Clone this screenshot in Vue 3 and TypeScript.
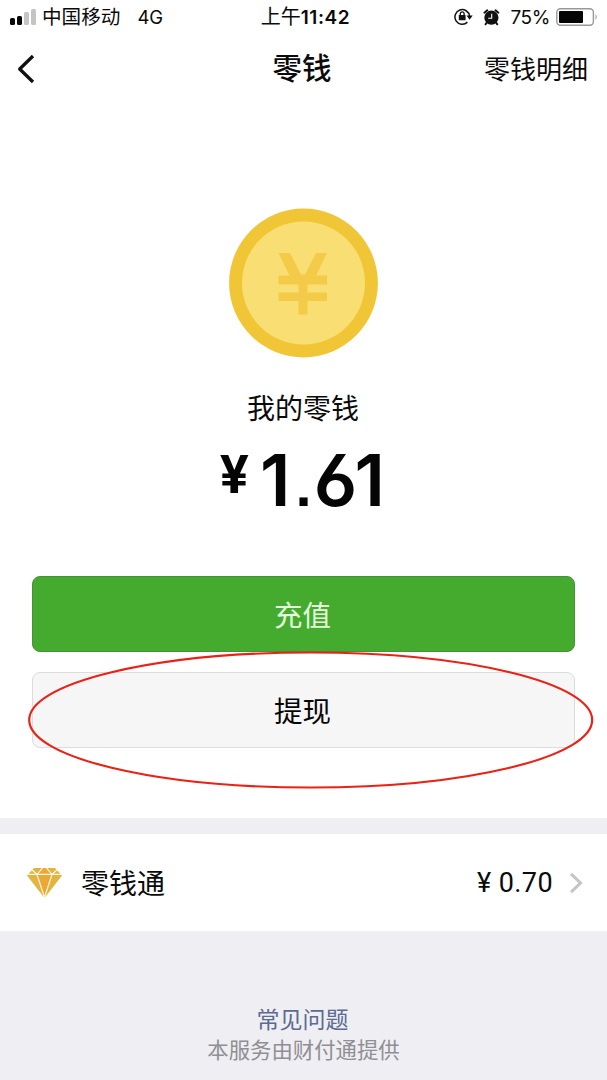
<script setup lang="ts">
const signalBars = [
  { height: 7, active: true },
  { height: 9, active: true },
  { height: 13, active: false },
  { height: 16, active: false },
]
const [whole, cents] = '1.61'.split('.')
const fundBalance = '¥ 0.70'
</script>

<template>
  <main class="wallet">
    <header class="status">
      <div class="carrier">
        <div class="signal">
          <i v-for="(bar, i) in signalBars" :key="i" :class="{ active: bar.active }" :style="{ height: bar.height + 'px' }"></i>
        </div>
        <span class="operator">中国移动</span>
        <span class="network">4G</span>
      </div>
      <div class="time">上午<b>11:42</b></div>
      <div class="indicators">
        <svg class="lock" width="20" height="18" viewBox="0 0 20 18">
          <path d="M13.4 14.1A7.3 7.3 0 1 1 15.5 8.1" fill="none" stroke="#111" stroke-width="1.5" />
          <path d="M12.500 7.600h6.200l-3.100 4.200z" fill="#111" />
          <path d="M6.300 7.500V5.800a1.900 1.900 0 0 1 3.800 0v1.700" fill="none" stroke="#111" stroke-width="1.300" />
          <rect x="4.800" y="6.900" width="6.800" height="5.400" rx=".6" fill="#111" />
        </svg>
        <svg class="alarm" width="17" height="17" viewBox="0 0 17 17">
          <circle cx="8.400" cy="8.700" r="7.100" fill="#111" />
          <path d="M1.500 3.700 4.300 1.300M12.500 1.300 15.300 3.700M3.800 13.500 2.600 15.300M13 13.500l1.200 1.800" stroke="#111" stroke-width="2" stroke-linecap="round" />
          <path d="M8.700 4.800v4.400H5.200" fill="none" stroke="#fff" stroke-width="1.100" />
        </svg>
        <span class="percent">75%</span>
        <svg class="battery" width="42" height="18" viewBox="0 0 42 18">
          <rect x=".8" y=".8" width="36.600" height="16.400" rx="3.600" fill="#fff" stroke="#999" stroke-width="1.400" />
          <rect x="3" y="3" width="24" height="12" rx="1" fill="#050505" />
          <path d="M39.600 6q2 3 0 6z" fill="#888" />
        </svg>
      </div>
    </header>

    <nav class="nav">
      <svg class="back" width="20" height="30" viewBox="0 0 20 30">
        <path d="M17 2 3.700 15 17 28" fill="none" stroke="#111" stroke-width="3.300" stroke-linejoin="round" />
      </svg>
      <h1>零钱</h1>
      <a class="detail">零钱明细</a>
    </nav>

    <section class="summary">
      <svg class="coin" width="150" height="150" viewBox="0 0 150 150">
        <circle cx="75.500" cy="75" r="74.400" fill="#f1c636" />
        <circle cx="75.500" cy="75" r="61.500" fill="#f9df73" />
        <path d="M50.500 45H62l11 21.500h4L88 45h11L88 67.500h11v9H79.500v8H99V93H79.500v13.500h-9V93H50.500v-8.500h20v-8h-20v-9h11z" fill="#f3cb49" />
      </svg>
      <p class="label">我的零钱</p>
      <p class="amount"><span class="yen">¥</span><span class="digits">{{ whole }}<span class="point">.</span>{{ cents }}</span></p>
    </section>

    <section class="actions">
      <button class="recharge">充值</button>
      <button class="withdraw">提现</button>
      <svg class="ellipse" width="568" height="140" viewBox="0 0 568 140">
        <ellipse cx="283.700" cy="70" rx="281.500" ry="67.500" fill="none" stroke="#e92216" stroke-width="2.200" />
      </svg>
    </section>

    <section class="fund">
      <svg class="diamond" width="35" height="30" viewBox="0 0 35 30">
        <path d="M7 0h21l7 7.500L17.500 30 0 7.500z" fill="#e3b440" />
        <path d="M12.500 0h10l3 6.500L17.500 30 9.500 6.500z" fill="#eba836" />
        <path d="M0 6.300h35M10.200 7 17.500 29.500 24.800 7M4.500 1.500l5.500 4.800L15.500 0M30.500 1.500 25 6.300 19.500 0" fill="none" stroke="#fff6dc" stroke-width="1.200" />
      </svg>
      <span class="fund-name">零钱通</span>
      <span class="fund-value">{{ fundBalance }}</span>
      <svg class="chevron" width="14" height="22" viewBox="0 0 14 22">
        <path d="m2 1.800 9.500 9.200L2 20.200" fill="none" stroke="#c5c5c7" stroke-width="3" />
      </svg>
    </section>

    <footer class="footer">
      <a class="faq">常见问题</a>
      <p>本服务由财付通提供</p>
    </footer>
  </main>
</template>

<style>
body {
  margin: 0;
  background: #eeeef3;
}
</style>

<style scoped>
.wallet {
  width: 607px;
  height: 1080px;
  overflow: hidden;
  background: #fff;
  color: #0b0b0b;
  font-family: Inter, "Noto Sans CJK SC", sans-serif;
  display: flex;
  flex-direction: column;
}
.status {
  height: 33px;
  display: grid;
  grid-template-columns: 200px 1fr 200px;
  align-items: center;
  font-size: 19px;
  line-height: 33px;
}
.carrier {
  display: flex;
  align-items: center;
  padding-left: 10px;
}
.signal {
  display: flex;
  align-items: flex-end;
  gap: 2px;
  height: 16px;
}
.signal i {
  width: 5px;
  border-radius: 1.5px;
  background: #c5c5c5;
}
.signal i.active {
  background: #080808;
}
.operator {
  margin-left: 6px;
  padding-top: 1px;
  font-size: 19.600px;
}
.network {
  margin-left: 17px;
  padding-top: 1px;
  font-size: 18.500px;
}
.time {
  text-align: center;
  white-space: nowrap;
  padding: 1px 0 0 4px;
  font-size: 20px;
}
.time b {
  font-weight: 600;
  font-size: 19px;
  letter-spacing: 0.600px;
}
.indicators {
  display: flex;
  align-items: center;
  justify-content: flex-end;
  padding-right: 9px;
}
.alarm {
  margin-left: 9px;
}
.percent {
  margin-left: 10px;
  padding-top: 1px;
  font-size: 19px;
  letter-spacing: -0.400px;
}
.battery {
  margin-left: 6px;
}
.nav {
  height: 72px;
  display: grid;
  grid-template-columns: 150px 1fr 150px;
  align-items: center;
  padding: 0 19px 0 16px;
  box-sizing: border-box;
}
h1 {
  margin: 0;
  padding-bottom: 2px;
  font-size: 29.500px;
  font-weight: 500;
  line-height: 70px;
  text-align: center;
}
.detail {
  padding-bottom: 3px;
  font-size: 26px;
  text-align: right;
  white-space: nowrap;
}
.summary {
  height: 471px;
  box-sizing: border-box;
  padding-top: 103px;
  display: flex;
  flex-direction: column;
  align-items: center;
}
.coin {
  flex: none;
  margin-right: 1px;
}
.label {
  margin: 31px 1px 0 0;
  font-size: 28px;
  line-height: 40px;
}
.amount {
  margin: 16px 0 0;
  padding-right: 5px;
  height: 70px;
  display: flex;
  align-items: flex-start;
  color: #050505;
}
.yen {
  padding-top: 5px;
  font-size: 52px;
  font-weight: 700;
  line-height: 50px;
}
.digits {
  margin-left: 11px;
  font-size: 72px;
  font-weight: 600;
  line-height: 70px;
  letter-spacing: -2.500px;
  font-feature-settings: "cv03";
}
.point {
  margin: 0 2px 0 7.500px;
  font-family: "Liberation Sans", Arial, sans-serif;
  font-weight: 700;
  font-size: 58px;
  letter-spacing: 0;
}
.actions {
  position: relative;
  height: 242px;
  box-sizing: border-box;
  padding: 0 32px;
  display: flex;
  flex-direction: column;
  gap: 20px;
}
button {
  flex: none;
  height: 76px;
  padding: 3px 2px 0 0;
  border-radius: 8px;
  font: 28.500px/71px Inter, "Noto Sans CJK SC", sans-serif;
}
.recharge {
  background: #45ab2e;
  border: 1px solid #46923a;
  color: #e4fbdd;
}
.withdraw {
  background: #f6f6f6;
  border: 1px solid #dcdcdc;
  color: #060606;
}
.ellipse {
  position: absolute;
  left: 27px;
  top: 74px;
}
.fund {
  flex: none;
  height: 97px;
  border-top: 16px solid #eeeef3;
  display: flex;
  align-items: center;
  padding: 0 24px 0 27px;
}
.fund-name {
  margin-left: 19px;
  padding-bottom: 1px;
  font-size: 28px;
}
.fund-value {
  margin-left: auto;
  font-family: Roboto, sans-serif;
  font-size: 27px;
  letter-spacing: 0.400px;
}
.chevron {
  margin-left: 16px;
}
.footer {
  flex: 1;
  background: #eeeef3;
  padding-top: 73px;
  text-align: center;
}
.faq {
  display: block;
  padding-right: 2px;
  color: #5b6b92;
  font-size: 23px;
  line-height: 32px;
}
.footer p {
  margin: -1px 0 0;
  color: #8f8f94;
  font-size: 21.400px;
  line-height: 30px;
}
</style>
